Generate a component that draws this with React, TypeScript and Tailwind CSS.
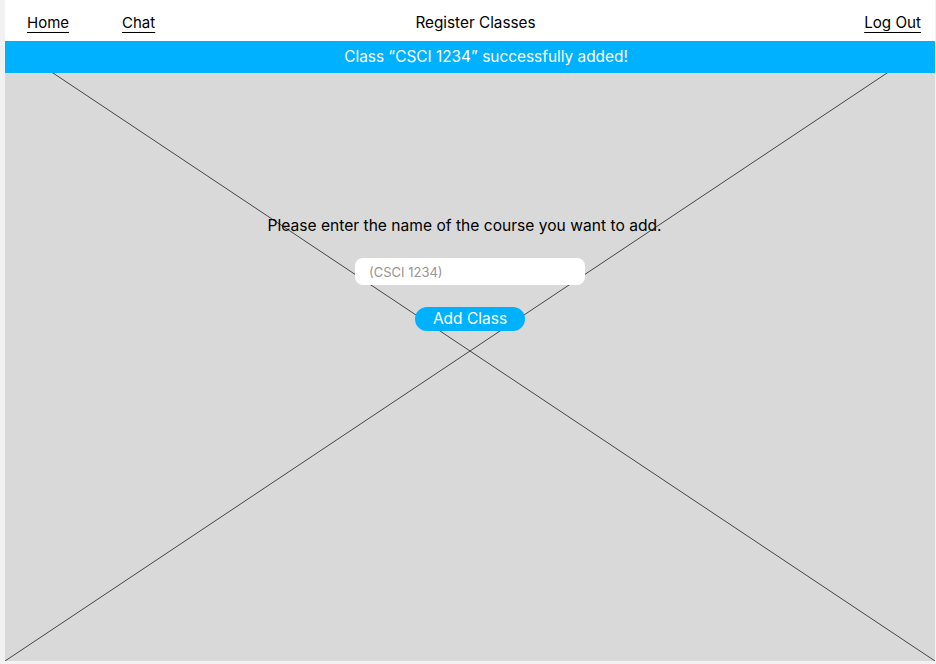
const FONT = "font-['Inter','Noto_Sans',sans-serif]";

function PlaceholderCross() {
  return (
    <svg
      className="absolute inset-0 h-full w-full"
      viewBox="0 0 930 620"
      preserveAspectRatio="none"
    >
      <line x1="0" y1="0" x2="930" y2="620" stroke="#1f1f1f" strokeWidth="0.8" />
      <line x1="930" y1="0" x2="0" y2="620" stroke="#1f1f1f" strokeWidth="0.8" />
    </svg>
  );
}

export default function App() {
  return (
    <div className={`min-h-[664px] bg-[#f2f2f2] pl-[5px] text-black ${FONT}`}>
      <div className="w-[930px]">
        {/* top nav */}
        <header className="flex h-[41px] items-center bg-white pl-[22px] pr-[14px] pt-[5px] text-[15px]">
          <div className="flex flex-1 items-center gap-[53px]">
            <a className="underline underline-offset-[4px] decoration-1">Home</a>
            <a className="underline underline-offset-[4px] decoration-1">Chat</a>
          </div>
          <div className="ml-[3px] text-[15.3px]">Register Classes</div>
          <div className="flex flex-1 justify-end">
            <a className="underline underline-offset-[4px] decoration-1 text-[15.2px]">Log Out</a>
          </div>
        </header>

        <main className="relative h-[620px] bg-[#d9d9d9]">
          <PlaceholderCross />

          <div className="relative flex h-[32px] items-center justify-center bg-[#00b1ff] pl-[32px] text-[15.4px] text-white">
            Class “CSCI 1234” successfully added!
          </div>

          <div className="relative flex flex-col items-center pt-[141px]">
            <p className="-ml-[11px] text-[15.6px] leading-6">
              Please enter the name of the course you want to add.
            </p>
            <input
              className="mt-[20px] h-[27px] w-[230px] rounded-[8px] bg-white px-[14px] text-[13px] text-black placeholder:text-[#9b9393] outline-none"
              placeholder="(CSCI 1234)"
            />
            <button className="mt-[22px] h-[24px] w-[110px] rounded-full bg-[#00b1ff] text-[15.5px] leading-none text-white">
              Add Class
            </button>
          </div>
        </main>
      </div>
    </div>
  );
}
